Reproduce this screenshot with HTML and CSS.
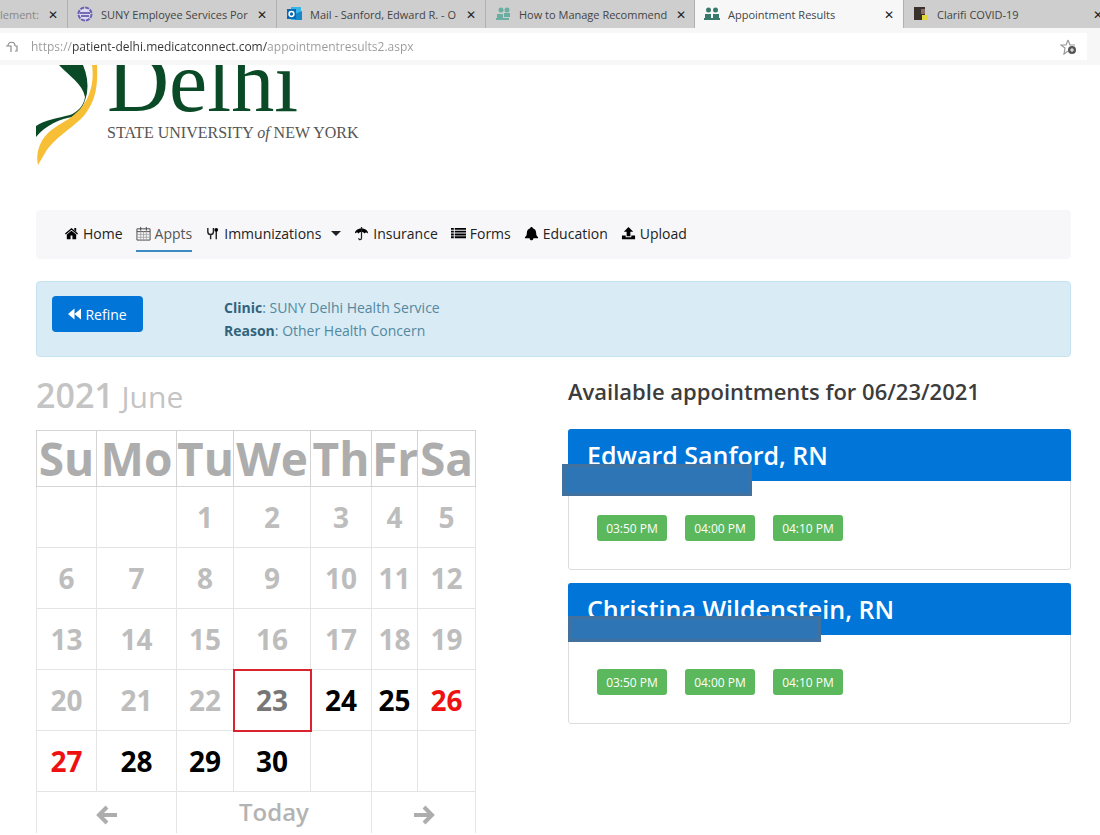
FILE: index.html
```html
<!DOCTYPE html>
<html lang="en">
  <head>
    <meta charset="UTF-8" />
    <meta name="viewport" content="width=device-width, initial-scale=1.0" />
    <title>Appointment Results</title>
    <link rel="stylesheet" href="styles.css">
  </head>
  <body>
    <!-- browser tabs -->
    <div class="tabs">
      <div class="tab tab-cut">
        <span class="tab-title">lement:</span>
        <button class="close" aria-label="Close tab">✕</button>
      </div>
      <div class="tab">
        <svg class="favicon" viewBox="0 0 16 16"><circle cx="8" cy="8" r="6.500" fill="#dcdaf0" stroke="#6860b0" stroke-width="2" stroke-dasharray="4 1"/><path d="M3 7h10M4 10h8" stroke="#5148a0" stroke-width="1.600"/></svg>
        <span class="tab-title">SUNY Employee Services Por</span>
        <button class="close" aria-label="Close tab">✕</button>
      </div>
      <div class="tab">
        <svg class="favicon" viewBox="0 0 16 16"><path d="M5 1h10v13H5z" fill="#35b5e8"/><path d="M9 8l7-3v9H9z" fill="#1687c9"/><path d="M1 3h9v10H1z" fill="#0868b4"/><circle cx="5.500" cy="8" r="2.400" fill="none" stroke="#fff" stroke-width="1.500"/></svg>
        <span class="tab-title">Mail - Sanford, Edward R. - O</span>
        <button class="close" aria-label="Close tab">✕</button>
      </div>
      <div class="tab">
        <svg class="favicon" viewBox="0 0 16 16"><g fill="#6aaea2"><circle cx="6" cy="4" r="2.500"/><circle cx="12" cy="4" r="2.500"/><path d="M2 13V8h6v5zM9 11V7h6v4z"/><path d="M1 12h13v2H1z"/></g></svg>
        <span class="tab-title">How to Manage Recommend</span>
        <button class="close" aria-label="Close tab">✕</button>
      </div>
      <div class="tab active">
        <svg class="favicon" viewBox="0 0 16 16"><g fill="#39796b"><circle cx="4.500" cy="4" r="2.500"/><circle cx="11.500" cy="4" r="2.500"/><path d="M1 12V8h6v4zM9 12V8h6v4z"/><path d="M0 12h16v2H0z"/></g></svg>
        <span class="tab-title">Appointment Results</span>
        <button class="close" aria-label="Close tab">✕</button>
      </div>
      <div class="tab">
        <svg class="favicon" viewBox="0 0 16 16"><path d="M1 1h11v13H1z" fill="#3a302c"/><path d="M8 3h4v5H8z" fill="#87706a"/><path d="M9 9h6v5H9z" fill="#e5d83c"/></svg>
        <span class="tab-title">Clarifi COVID-19</span>
        <button class="close" aria-label="Close tab">✕</button>
      </div>
    </div>

    <!-- address bar -->
    <div class="toolbar">
      <div class="address">
        <svg class="lock" viewBox="0 0 14 14"><path d="M3 6c0-5 7-5 7 0M1 6h5v6M10 6h2v5h-2" fill="none" stroke="#8b8b8b" stroke-width="1.200"/></svg>
        <input class="url" type="text" aria-label="Address" value="https://patient-delhi.medicatconnect.com/appointmentresults2.aspx" />
        <button class="favorite" aria-label="Add to favorites">
          <svg viewBox="0 0 18 16"><path d="M8 1l2 5h5M8 1L6 6H1l4 3-1 6 4-3" fill="none" stroke="#999" stroke-width="1.200"/><circle cx="12" cy="11" r="4" fill="#555"/><path d="M12 9v4M10 11h4" stroke="#fff"/></svg>
        </button>
      </div>
    </div>

    <div class="page">
      <header class="brand">
        <svg class="swoosh" viewBox="0 0 64 102">
          <path fill="#0b4a26" d="M23 0H47Q53 14 51 28C48 42 42 50 36 52C24 54 10 60 0 72V61C8 55 22 53 34 50C42 47 48 40 49 32C46 18 34 12 23 0Z"/>
          <path fill="#f6bf35" d="M56 0H61C62 20 60 34 50 48C42 60 18 72 9 88L2 100C0 90 2 78 12 68C20 60 32 56 40 48C52 38 59 20 56 0Z"/>
        </svg>
        <div>
          <div class="brand-name">Delhi</div>
          <div class="brand-sub">STATE UNIVERSITY <i>of</i> NEW YORK</div>
        </div>
      </header>

      <nav class="menu">
        <a href="#home"><svg viewBox="0 0 16 16"><path d="M8 2l7 6-1 1-6-5-6 5-1-1zM8 5l5 4v5H9v-4H7v4H3V9zM11 2h2v4l-2-2z"/></svg>Home</a>
        <a href="#appts" class="current"><svg viewBox="0 0 16 16"><path d="M1 3h14v12H1zM1 6h14M5 1v4M11 1v4" fill="none" stroke="#444"/><path d="M5 6v9M8 6v9M11 6v9M1 9h14M1 12h14" fill="none" stroke="#aaa"/></svg>Appts</a>
        <a href="#immunizations"><svg viewBox="0 0 16 16"><path d="M3 2v4c0 4 6 4 6 0V2M6 9v5M12 5v9" fill="none" stroke="#222" stroke-width="1.500"/><circle cx="12" cy="4" r="2"/></svg>Immunizations<span class="caret"></span></a>
        <a href="#insurance"><svg viewBox="0 0 16 16"><path d="M1 8c0-7 14-7 14 0-2-2-3-1-4 0-1-2-5-2-6 0-1-1-2-2-4 0z"/><path d="M8 1v12c0 2-3 2-3 0" fill="none" stroke="#222" stroke-width="1.300"/></svg>Insurance</a>
        <a href="#forms"><svg viewBox="0 0 16 16"><path d="M0 2h3v2H0zM4 2h12v2H4zM0 5h3v2H0zM4 5h12v2H4zM0 8h3v2H0zM4 8h12v2H4zM0 11h3v2H0zM4 11h12v2H4z"/></svg>Forms</a>
        <a href="#education"><svg viewBox="0 0 16 16"><path d="M7 1h2v1c3 1 4 3 4 6 0 2 1 3 2 4v1H1v-1c1-1 2-2 2-4 0-3 1-5 4-6zM6 13h4c0 3-4 3-4 0z"/></svg>Education</a>
        <a href="#upload"><svg viewBox="0 0 16 16"><path d="M8 1l5 5h-3v5H6V6H3zM1 10h4v2h6v-2h4v4H1z"/></svg>Upload</a>
      </nav>

      <section class="info">
        <button class="refine"><svg viewBox="0 0 14 12"><path d="M7 0v12L0 6zM14 0v12L7 6z"/></svg>Refine</button>
        <p class="info-text">
          <b>Clinic</b>: SUNY Delhi Health Service<br />
          <b>Reason</b>: Other Health Concern
        </p>
      </section>

      <main class="columns">
        <section>
          <h2 class="month"><b>2021</b> June</h2>
          <table class="calendar">
            <colgroup>
              <col class="su"><col class="mo"><col class="tu"><col class="we"><col class="th"><col class="fr"><col class="sa">
            </colgroup>
            <thead>
              <tr><th>Su</th><th>Mo</th><th>Tu</th><th>We</th><th>Th</th><th>Fr</th><th>Sa</th></tr>
            </thead>
            <tbody>
              <tr><td></td><td></td><td>1</td><td>2</td><td>3</td><td>4</td><td>5</td></tr>
              <tr><td>6</td><td>7</td><td>8</td><td>9</td><td>10</td><td>11</td><td>12</td></tr>
              <tr><td>13</td><td>14</td><td>15</td><td>16</td><td>17</td><td>18</td><td>19</td></tr>
              <tr>
                <td>20</td><td>21</td><td>22</td>
                <td class="selected"><button>23</button></td>
                <td class="open"><button>24</button></td>
                <td class="open"><button>25</button></td>
                <td class="weekend"><button>26</button></td>
              </tr>
              <tr>
                <td class="weekend"><button>27</button></td>
                <td class="open"><button>28</button></td>
                <td class="open"><button>29</button></td>
                <td class="open"><button>30</button></td>
                <td></td><td></td><td></td>
              </tr>
            </tbody>
            <tfoot>
              <tr>
                <td colspan="2"><button aria-label="Previous month"><svg viewBox="0 0 22 20"><path d="M21 10H3M11 2l-8 8 8 8"/></svg></button></td>
                <td colspan="3"><button>Today</button></td>
                <td colspan="2"><button aria-label="Next month"><svg viewBox="0 0 22 20"><path d="M1 10h18M11 2l8 8-8 8"/></svg></button></td>
              </tr>
            </tfoot>
          </table>
        </section>

        <section>
          <h3 class="available">Available appointments for 06/23/2021</h3>
          <article class="card">
            <h4 class="provider">Edward Sanford, RN</h4>
            <div class="cover cover-first"></div>
            <div class="slots">
              <button>03:50 PM</button>
              <button>04:00 PM</button>
              <button>04:10 PM</button>
            </div>
          </article>
          <article class="card">
            <h4 class="provider">Christina Wildenstein, RN</h4>
            <div class="cover cover-second"></div>
            <div class="slots">
              <button>03:50 PM</button>
              <button>04:00 PM</button>
              <button>04:10 PM</button>
            </div>
          </article>
        </section>
      </main>
    </div>
  </body>
</html>
```
FILE: styles.css
```css
* {
  margin: 0;
  padding: 0;
  box-sizing: border-box;
}
body {
  background-color: #ffffff;
  color: #222222;
  font-family: "Open Sans", "Noto Sans", sans-serif;
  font-size: 14px;
}
button {
  border: 0;
  background: none;
  font: inherit;
  color: inherit;
  cursor: pointer;
}
a {
  color: inherit;
  text-decoration: none;
}

/* browser */
.tabs {
  display: grid;
  grid-template-columns: 68px repeat(5, 209px);
  height: 28px;
  overflow: hidden;
  background-color: #cecece;
  font-size: 11px;
}
.tab {
  display: flex;
  align-items: center;
  gap: 8px;
  padding: 0 8px 0 9px;
  border-right: 1px solid #b0b0b0;
  color: #444444;
}
.tab-cut {
  padding-left: 0;
  color: #888888;
}
.tab.active {
  background-color: #f7f7f7;
}
.favicon {
  width: 16px;
  height: 16px;
  flex: none;
}
.tab-title {
  flex: 1;
  white-space: nowrap;
}
.close {
  width: 12px;
  flex: none;
  font-size: 12px;
  color: #222222;
}
.toolbar {
  padding: 5px 13px 5px 0;
  background-color: #f7f7f7;
}
.address {
  display: flex;
  align-items: center;
  height: 27px;
  padding: 0 9px 0 5px;
  background-color: #ffffff;
}
.lock {
  width: 14px;
  height: 14px;
  flex: none;
}
.url {
  flex: 1;
  margin-left: 12px;
  border: 0;
  outline: 0;
  font: inherit;
  font-size: 12px;
  color: transparent;
  /* the host name is darker than the rest of the address */
  background: linear-gradient(to right, #999999 41px, #333333 41px, #333333 236px, #999999 236px);
  -webkit-background-clip: text;
  background-clip: text;
}
.favorite svg {
  display: block;
  width: 18px;
  height: 16px;
}

/* page */
.page {
  padding: 0 29px 0 36px;
}
.brand {
  display: flex;
  gap: 7px;
  height: 145px;
  overflow: hidden;
}
.swoosh {
  width: 64px;
  height: 102px;
}
.brand-name {
  font-family: "Liberation Serif", serif;
  font-size: 86px;
  line-height: 34px;
  color: #0b4a26;
}
.brand-sub {
  margin-top: 24px;
  font-family: "Liberation Serif", serif;
  font-size: 16px;
  line-height: 20px;
  white-space: nowrap;
  color: #555555;
}
.menu {
  display: flex;
  align-items: center;
  gap: 13px;
  height: 49px;
  padding: 0 28px;
  border-radius: 4px;
  background-color: #f7f7f9;
}
.menu a {
  display: flex;
  align-items: center;
  gap: 4px;
  height: 34px;
  border-bottom: 2px solid transparent;
}
.menu a.current {
  border-bottom-color: #3b8ac4;
  color: #555555;
}
.menu svg {
  width: 15px;
  height: 15px;
}
.caret {
  margin-left: 6px;
  border: 5px solid transparent;
  border-top-color: #222222;
  border-bottom: 0;
}
.info {
  display: flex;
  align-items: flex-start;
  gap: 81px;
  min-height: 76px;
  margin-top: 22px;
  padding: 14px 15px;
  border: 1px solid #c5e4f0;
  border-radius: 4px;
  background-color: #d9ebf5;
}
.refine {
  display: flex;
  align-items: center;
  justify-content: center;
  gap: 4px;
  width: 91px;
  height: 36px;
  border-radius: 4px;
  background-color: #0275d8;
  color: #ffffff;
}
.refine svg {
  width: 13px;
  height: 12px;
  fill: #ffffff;
}
.info-text {
  line-height: 23px;
  color: #53889e;
}
.info-text b {
  color: #31647c;
}
.columns {
  display: grid;
  grid-template-columns: 532fr 503fr;
}

/* calendar */
.month {
  margin-top: 14px;
  line-height: 48px;
  font-size: 30px;
  font-weight: 400;
  color: #c4c4c4;
}
.month b {
  font-size: 34px;
  font-weight: 600;
}
.calendar {
  width: 440px;
  margin-top: 9px;
  table-layout: fixed;
  border-collapse: collapse;
  border: 1px solid #cccccc;
  border-bottom: 0;
  text-align: center;
  font-size: 28px;
  font-weight: 700;
  color: #bdbdbd;
}
.su { width: 60px; }
.mo { width: 80px; }
.tu { width: 57px; }
.we { width: 77px; }
.th { width: 61px; }
.fr { width: 46px; }
.sa { width: 58px; }
.calendar th {
  height: 56px;
  border: 1px solid #d4d4d4;
  font-size: 46px;
  line-height: 55px;
  color: #adadad;
}
.calendar td {
  height: 61px;
  border: 1px solid #e4e4e4;
}
.calendar td button {
  width: 100%;
}
.calendar .selected {
  outline: 2px solid #d9232e;
  outline-offset: -1px;
  color: #777777;
}
.calendar .open {
  color: #000000;
}
.calendar .weekend {
  color: #ee1111;
}
.calendar tfoot td {
  height: 41px;
  border-top: 1px solid #bbbbbb;
  border-bottom: 0;
  font-size: 24px;
  font-weight: 600;
  line-height: 40px;
  color: #b3b3b3;
}
.calendar svg {
  width: 22px;
  height: 20px;
  fill: none;
  stroke: #adadad;
  stroke-width: 4;
  vertical-align: middle;
}

/* appointments */
.available {
  margin-top: 20px;
  font-size: 22px;
  font-weight: 600;
  line-height: 28px;
  color: #3c3c3c;
}
.card {
  position: relative;
  margin-bottom: 13px;
  border: 1px solid #dddddd;
  border-radius: 3px;
}
.available + .card {
  margin-top: 24px;
}
.provider {
  margin: -1px;
  padding: 0 19px;
  border-radius: 3px 3px 0 0;
  background-color: #0275d8;
  font-size: 25px;
  font-weight: 600;
  line-height: 52px;
  color: #ffffff;
}
.slots {
  display: flex;
  gap: 18px;
  padding: 35px 28px 28px;
}
.slots button {
  width: 70px;
  height: 26px;
  border-radius: 3px;
  background-color: #5cb85c;
  font-size: 12px;
  color: #ffffff;
}
/* bars laid over the lines under each name */
.cover {
  position: absolute;
  border: 3px solid #41719c;
  background-color: #2e75b6;
}
.cover-first {
  top: 34px;
  left: -7px;
  width: 190px;
  height: 32px;
}
.cover-second {
  top: 32px;
  left: -1px;
  width: 253px;
  height: 26px;
}
```
